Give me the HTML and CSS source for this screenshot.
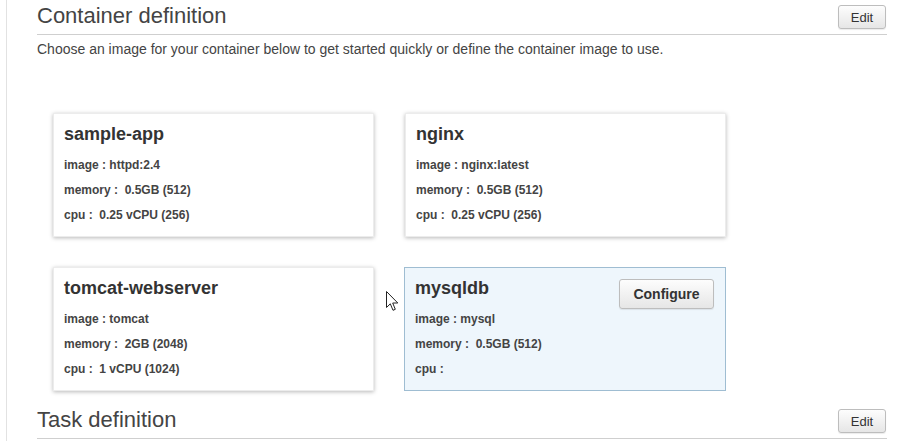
FILE: index.html
```html
<!DOCTYPE html>
<html>
<head>
<meta charset="utf-8">
<link rel="stylesheet" href="styles.css">
</head>
<body>
<div class="page">
  <section class="section">
    <div class="section-head">
      <h2 class="section-title">Container definition</h2>
      <button class="btn btn-edit">Edit</button>
    </div>
    <p class="intro">Choose an image for your container below to get started quickly or define the container image to use.</p>
    <div class="cards">
      <div class="card">
        <div class="card-head"><h3 class="card-title">sample-app</h3></div>
        <div class="line">image : httpd:2.4</div>
        <div class="line">memory : &nbsp;0.5GB (512)</div>
        <div class="line">cpu : &nbsp;0.25 vCPU (256)</div>
      </div>
      <div class="card">
        <div class="card-head"><h3 class="card-title">nginx</h3></div>
        <div class="line">image : nginx:latest</div>
        <div class="line">memory : &nbsp;0.5GB (512)</div>
        <div class="line">cpu : &nbsp;0.25 vCPU (256)</div>
      </div>
      <div class="card">
        <div class="card-head"><h3 class="card-title">tomcat-webserver</h3></div>
        <div class="line">image : tomcat</div>
        <div class="line">memory : &nbsp;2GB (2048)</div>
        <div class="line">cpu : &nbsp;1 vCPU (1024)</div>
      </div>
      <div class="card card-selected">
        <div class="card-head"><h3 class="card-title">mysqldb</h3><button class="btn btn-configure">Configure</button></div>
        <div class="line">image : mysql</div>
        <div class="line">memory : &nbsp;0.5GB (512)</div>
        <div class="line">cpu :</div>
      </div>
    </div>
  </section>
  <section class="section section-task">
    <div class="section-head">
      <h2 class="section-title">Task definition</h2>
      <button class="btn btn-edit">Edit</button>
    </div>
  </section>
  <svg class="cursor" width="13" height="21" viewBox="0 0 13 21"><path d="M0.5 0.5 L0.5 16.5 L4.3 12.8 L7 19.3 L9.3 18.3 L6.7 12 L11.8 12 Z" fill="#fff" stroke="#222" stroke-width="1" stroke-linejoin="miter"/></svg>
</div>
</body>
</html>
```
FILE: styles.css
```css
html, body {
  margin: 0;
  padding: 0;
  background: #fff;
}
body {
  font-family: "Liberation Sans", Arial, sans-serif;
  color: #444;
  width: 918px;
  height: 441px;
  overflow: hidden;
}
.page {
  position: relative;
  margin-left: 6px;
  margin-right: 31px;
  border-left: 1px solid #e2e2e2;
  padding-left: 30px;
  height: 441px;
}
.section-head {
  display: flex;
  align-items: center;
  justify-content: space-between;
  height: 34px;
  border-bottom: 1px solid #cfcfcf;
}
.section-title {
  margin: 0;
  font-size: 22px;
  font-weight: normal;
  color: #444;
  line-height: 26px;
  margin-top: -2px;
}
.btn {
  font-family: "Liberation Sans", Arial, sans-serif;
  background: linear-gradient(#fdfdfd, #e6e6e6);
  border: 1px solid #bdbdbd;
  border-radius: 3px;
  color: #333;
  padding: 0;
  box-shadow: 0 1px 1px rgba(0,0,0,0.08);
}
.btn-edit {
  width: 48px;
  height: 24px;
  font-size: 13px;
  margin-right: 1px;
}
.intro {
  margin: 6px 0 0;
  font-size: 14px;
  line-height: 17px;
  color: #444;
}
.cards {
  display: grid;
  grid-template-columns: 321px 321px;
  grid-auto-rows: 124px;
  gap: 30px 31px;
  margin: 55px 0 0 16px;
}
.card {
  background: #fff;
  border: 1px solid #ececec;
  box-shadow: 0 1px 4px rgba(0,0,0,0.28);
  padding: 9px 11px 10px 10px;
  box-sizing: border-box;
}
.card-selected {
  background: #eef6fc;
  border: 1px solid #9fbdd2;
  box-shadow: none;
  margin-left: -1px;
  width: 322px;
}
.card-head {
  display: flex;
  justify-content: space-between;
  align-items: flex-start;
  height: 22px;
  margin-bottom: 8px;
}
.card-title {
  margin: 0;
  font-size: 18px;
  line-height: 22px;
  font-weight: bold;
  color: #333;
}
.btn-configure {
  width: 95px;
  height: 30px;
  margin-top: 2px;
  font-size: 14px;
  font-weight: bold;
  color: #333;
}
.line {
  font-size: 12px;
  line-height: 25px;
  font-weight: bold;
  color: #444;
  white-space: pre;
}
.section-task {
  margin-top: 13px;
}
.cursor {
  position: absolute;
  left: 379px;
  top: 291px;
}
```
